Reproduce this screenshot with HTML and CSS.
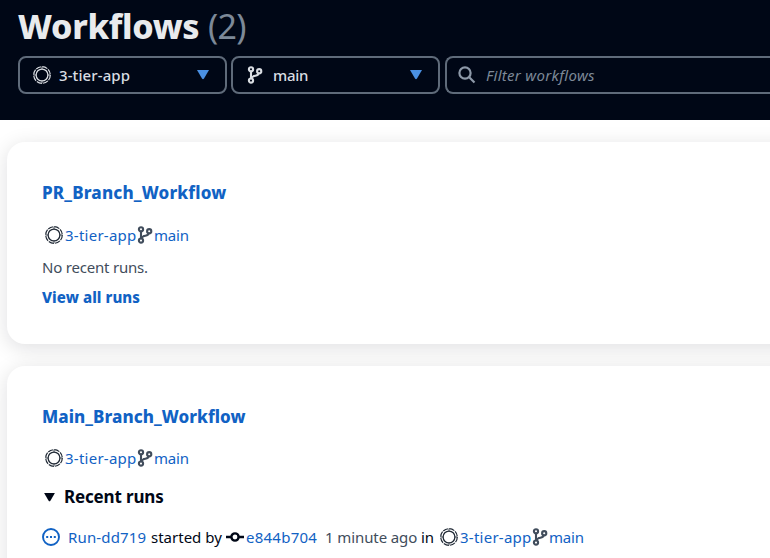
FILE: index.html
```
<!DOCTYPE html>
<html lang="en">
<head>
<meta charset="utf-8">
<title>Workflows</title>
<link rel="stylesheet" href="styles.css">
</head>
<body>
<svg class="defs" aria-hidden="true">
  <symbol id="repo" viewBox="0 0 18 18">
    <g fill="none" stroke="currentColor">
      <circle cx="9" cy="9" r="8.3" stroke-width="1.2" stroke-dasharray="5.5 1.02" />
      <circle cx="9" cy="9" r="5.9" stroke-width="1.3" />
      <path d="M9 .8v2.5M9 14.7v2.5M.8 9h2.5M14.7 9h2.5" stroke-width=".8" />
    </g>
  </symbol>
  <symbol id="branch" viewBox="0 0 16 18">
    <g fill="none" stroke="currentColor" stroke-width="2.1">
      <circle cx="4" cy="3.3" r="2.1" /><circle cx="4" cy="14.6" r="2.1" /><circle cx="12.2" cy="5.2" r="2.1" />
      <path d="M4 5.5v6.9M11.9 7.2c-.5 3-3.6 2.2-5.5 3.1-1.3.7-2 1.4-2.2 2" />
    </g>
  </symbol>
</svg>
<header class="top">
  <h1>Workflows <span class="count">(2)</span></h1>
  <div class="filters">
    <div class="select"><svg class="icon repo"><use href="#repo"/></svg><span class="value">3-tier-app</span><svg class="caret" viewBox="0 0 12 10"><path d="M0 0h12L7 8.5Q6 10 5 8.5Z"/></svg></div>
    <div class="select second"><svg class="icon branch"><use href="#branch"/></svg><span class="value main">main</span><svg class="caret" viewBox="0 0 12 10"><path d="M0 0h12L7 8.5Q6 10 5 8.5Z"/></svg></div>
    <div class="search"><svg class="glass" viewBox="0 0 18 18"><circle cx="7" cy="7" r="5.6"/><path d="m11 11 5.5 5.5"/></svg><span>Filter workflows</span></div>
  </div>
</header>
<main>
  <section class="card first">
    <h2 class="pr">PR_Branch_Workflow</h2>
    <div class="source"><svg class="icon repo"><use href="#repo"/></svg><a class="app">3-tier-app</a><svg class="icon branch"><use href="#branch"/></svg><a class="ref">main</a></div>
    <p class="empty">No recent runs.</p>
    <a class="all">View all runs</a>
  </section>
  <section class="card">
    <h2 class="mb">Main_Branch_Workflow</h2>
    <div class="source"><svg class="icon repo"><use href="#repo"/></svg><a class="app">3-tier-app</a><svg class="icon branch"><use href="#branch"/></svg><a class="ref">main</a></div>
    <h3><svg class="toggle" viewBox="0 0 12 10"><path d="M0 0h12L7 8.5Q6 10 5 8.5Z"/></svg><span>Recent runs</span></h3>
    <div class="run">
      <svg class="status" viewBox="0 0 18 18"><circle cx="9" cy="9" r="8" fill="none" stroke="currentColor" stroke-width="1.9"/><path d="M4.2 8.1h2v2h-2zM8 8.1h2v2H8zM11.8 8.1h2v2h-2z" fill="currentColor"/></svg>
      <a class="id">Run-dd719</a><span class="started">started by</span>
      <svg class="commit" viewBox="0 0 18 10"><path d="M0 5h5M13 5h5"/><circle cx="9" cy="5" r="3.6"/></svg>
      <a class="hash">e844b704</a><span class="time">1 minute ago</span><span class="in">in</span>
      <svg class="icon repo"><use href="#repo"/></svg><a class="app">3-tier-app</a><svg class="icon branch"><use href="#branch"/></svg><a class="ref">main</a>
    </div>
  </section>
</main>
</body>
</html>
```
FILE: styles.css
```
* { box-sizing: border-box; }
body {
  margin: 0;
  height: 558px;
  overflow: hidden;
  background: #fff;
  color: #000716;
  font: 15px/20px "Noto Sans", "Open Sans", sans-serif;
  white-space: nowrap;
}
h1, h2, h3, p { margin: 0; }
svg { flex: none; display: block; }
.defs { display: none; }

.top { height: 120px; padding: 6px 0 0 18px; background: #000716; color: #e9ebed; overflow: hidden; }
h1 { height: 50px; font-size: 34px; line-height: 40px; font-weight: 800; letter-spacing: -.3px; }
.count { color: #7d8998; font-weight: 400; letter-spacing: -.6px; }
.filters { display: flex; gap: 4px; }
.select, .search {
  display: flex;
  align-items: center;
  height: 38px;
  border: 2px solid #5f6b7a;
  border-radius: 8px;
}
.select { width: 209px; padding: 0 16px 0 13px; color: #d9dde2; }
.second { padding-left: 14px; }
.search { flex: 1; margin-left: 1px; padding-left: 11px; border-right: 0; border-radius: 8px 0 0 8px; color: #7d8998; font-style: italic; letter-spacing: .3px; }
.value { margin-left: 8px; font-weight: 500; letter-spacing: .1px; }
.main { margin-left: 10px; letter-spacing: -.3px; }
.caret { width: 12px; height: 10px; margin-left: auto; fill: #4a90e2; }
.glass { width: 18px; height: 18px; margin-right: 10px; fill: none; stroke: #8d99a8; stroke-width: 2.2; }
.icon.repo { width: 18px; height: 18px; }
.icon.branch { width: 16px; height: 18px; }

main { height: 438px; overflow: hidden; padding: 22px 0 0 7px; }
.card {
  width: 800px;
  height: 202px;
  margin-bottom: 22px;
  padding: 40px 0 0 35px;
  border-radius: 18px;
  background: #fff;
  box-shadow: 0 4px 20px 1px rgba(0, 7, 22, .12);
}
.card + .card { height: 250px; }
.card a, h2 { color: #1162c4; }
h2 { font-size: 17px; line-height: 22px; font-weight: 800; }
.pr { letter-spacing: .18px; }
.mb { letter-spacing: .06px; }
.source { display: flex; align-items: center; height: 20px; margin-top: 21px; padding-left: 3px; color: #414d5c; }
.card + .card .source { margin-top: 20px; }
.source .repo, .run .repo { color: #222b37; }
.app { width: 72px; margin-left: 2px; letter-spacing: .25px; }
.ref { margin-left: 1px; letter-spacing: -.2px; }
.empty { margin-top: 12px; color: #414d5c; letter-spacing: -.2px; }
.all { display: block; margin-top: 10px; font-weight: 800; letter-spacing: .06px; }
h3 { display: flex; align-items: center; margin-top: 18px; font-size: 17px; line-height: 22px; font-weight: 700; letter-spacing: -.15px; }
.toggle { width: 11px; height: 9px; margin: 0 9px 0 2px; fill: #000716; }
.run { display: flex; align-items: center; height: 20px; margin-top: 19px; color: #414d5c; }
.status { width: 18px; height: 18px; margin-right: 8px; color: #1162c4; }
.id { width: 83px; letter-spacing: .15px; }
.started { width: 75px; color: #000716; }
.commit { width: 18px; height: 10px; margin-right: 2px; fill: none; stroke: #000716; stroke-width: 2.4; }
.hash { width: 79px; letter-spacing: .25px; }
.time { width: 96px; letter-spacing: -.1px; }
.in { width: 19px; color: #000716; }
```
